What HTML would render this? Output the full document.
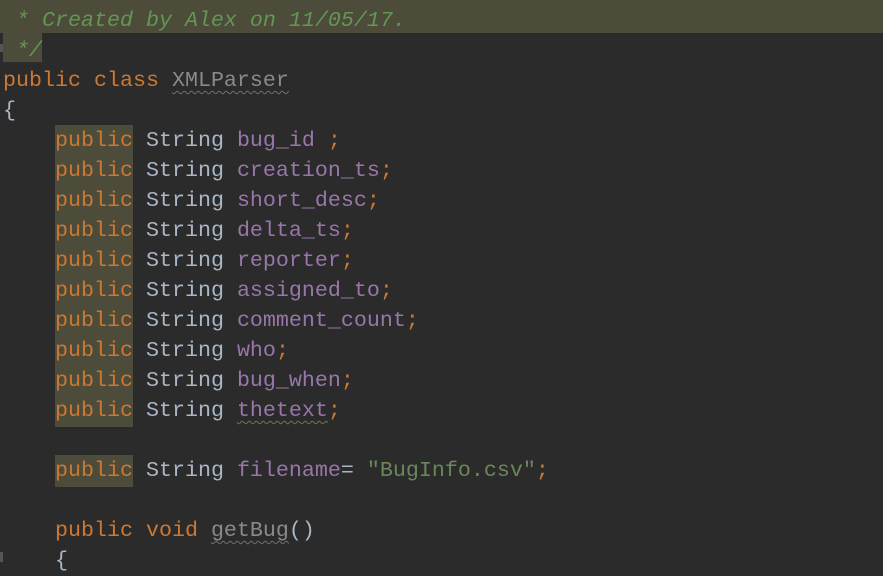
<!DOCTYPE html>
<html><head><style>
body{margin:0;background:#2b2b2b;width:883px;height:569px;overflow:hidden;position:relative}
.hl1{position:absolute;left:0;top:0;width:883px;height:33px;background:#4d4b39}
.hl2{position:absolute;left:3px;top:33px;width:39px;height:29px;background:#4d4b39}
.m1{position:absolute;left:0;top:44px;width:3px;height:8px;background:#555}
.m2{position:absolute;left:0;top:552px;width:3px;height:10px;background:#555}
pre{position:absolute;left:3px;top:6px;margin:0;font-family:"Liberation Mono",monospace;font-size:21.67px;line-height:30px;color:#a9b7c6}
.c{color:#629755;font-style:italic}
.k{color:#cc7832}
.p{color:#9876aa}
.s{color:#6a8759}
.g{color:#8a8a8a;text-decoration:underline wavy #707070 1px;text-underline-offset:4px}
.h{background:#4d4b39;padding:3px 0 4px}
.w{text-decoration:underline wavy #6a7a50 1px;text-underline-offset:4px}
</style></head><body>
<div class="hl1"></div><div class="hl2"></div><div class="m1"></div><div class="m2"></div>
<pre><span class="c"> * Created by Alex on 11/05/17.</span>
<span class="c"> */</span>
<span class="k">public class </span><span class="g">XMLParser</span>
{
    <span class="k h">public</span> String <span class="p">bug_id </span><span class="k">;</span>
    <span class="k h">public</span> String <span class="p">creation_ts</span><span class="k">;</span>
    <span class="k h">public</span> String <span class="p">short_desc</span><span class="k">;</span>
    <span class="k h">public</span> String <span class="p">delta_ts</span><span class="k">;</span>
    <span class="k h">public</span> String <span class="p">reporter</span><span class="k">;</span>
    <span class="k h">public</span> String <span class="p">assigned_to</span><span class="k">;</span>
    <span class="k h">public</span> String <span class="p">comment_count</span><span class="k">;</span>
    <span class="k h">public</span> String <span class="p">who</span><span class="k">;</span>
    <span class="k h">public</span> String <span class="p">bug_when</span><span class="k">;</span>
    <span class="k h">public</span> String <span class="p w">thetext</span><span class="k">;</span>

    <span class="k h">public</span> String <span class="p">filename</span>= <span class="s">"BugInfo.csv"</span><span class="k">;</span>

    <span class="k">public void </span><span class="g">getBug</span>()
    {
</pre>
</body></html>
